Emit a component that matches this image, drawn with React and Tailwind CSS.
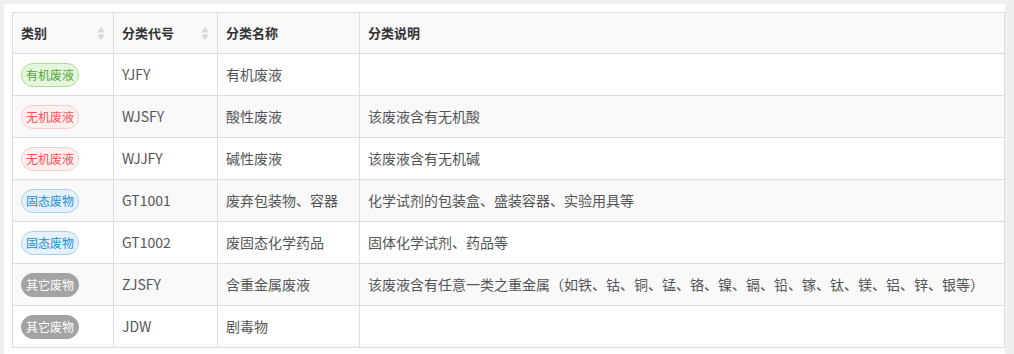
import React from "react";

const rows = [
  { t: "有机废液", c: "green", code: "YJFY", name: "有机废液", desc: "" },
  { t: "无机废液", c: "red", code: "WJSFY", name: "酸性废液", desc: "该废液含有无机酸" },
  { t: "无机废液", c: "red", code: "WJJFY", name: "碱性废液", desc: "该废液含有无机碱" },
  { t: "固态废物", c: "blue", code: "GT1001", name: "废弃包装物、容器", desc: "化学试剂的包装盒、盛装容器、实验用具等" },
  { t: "固态废物", c: "blue", code: "GT1002", name: "废固态化学药品", desc: "固体化学试剂、药品等" },
  { t: "其它废物", c: "gray", code: "ZJSFY", name: "含重金属废液", desc: "该废液含有任意一类之重金属（如铁、钴、铜、锰、铬、镍、镉、铅、镓、钛、镁、铝、锌、银等）" },
  { t: "其它废物", c: "gray", code: "JDW", name: "剧毒物", desc: "" },
];

const badgeCls = {
  green: "bg-[#e5f6dd] border-[#a7df92] text-[#4fa832]",
  red: "bg-[#fff0f0] border-[#ffcaca] text-[#f25555]",
  blue: "bg-[#e5f1fd] border-[#a8cff3] text-[#1d8ed6]",
  gray: "bg-[#a3a3a3] border-[#a3a3a3] text-white",
};

function Sort() {
  return (
    <svg width="8" height="13" viewBox="0 0 8 13" className="shrink-0">
      <path d="M4 0 L8 5.5 L0 5.5 Z" fill="#d8d8d8" />
      <path d="M4 13 L8 7.5 L0 7.5 Z" fill="#d8d8d8" />
    </svg>
  );
}

export default function App() {
  return (
    <div
      className="w-[1014px] h-[354px] bg-[#efefef] pt-[4px] pl-[4px] overflow-hidden"
      style={{ fontFamily: '"Noto Sans CJK SC", "Noto Sans", sans-serif' }}
    >
      <div className="w-[1001px] h-[400px] bg-white pt-[8px] pl-[8px]">
        <table className="w-[993px] border-collapse table-fixed text-[14px]">
          <colgroup>
            <col className="w-[101px]" />
            <col className="w-[104px]" />
            <col className="w-[142px]" />
            <col />
          </colgroup>
          <thead>
            <tr className="h-[41px] bg-[#f9f9f9] text-[13px]">
              <th className="border border-[#dddddd] px-[8px] text-left font-bold text-[#333]">
                <div className="flex items-center justify-between">
                  <span>类别</span>
                  <Sort />
                </div>
              </th>
              <th className="border border-[#dddddd] px-[8px] text-left font-bold text-[#333]">
                <div className="flex items-center justify-between">
                  <span>分类代号</span>
                  <Sort />
                </div>
              </th>
              <th className="border border-[#dddddd] px-[8px] text-left font-bold text-[#333]">分类名称</th>
              <th className="border border-[#dddddd] px-[8px] text-left font-bold text-[#333]">分类说明</th>
            </tr>
          </thead>
          <tbody>
            {rows.map((r, i) => (
              <tr key={i} className={`h-[42px] ${i % 2 === 1 ? "bg-[#f9f9f9]" : "bg-white"}`}>
                <td className="border border-[#dddddd] px-[8px] text-[#555]">
                  <span
                    className={`inline-flex items-center justify-center h-[24px] px-[4px] rounded-full border text-[12px] ${badgeCls[r.c]}`}
                  >
                    {r.t}
                  </span>
                </td>
                <td className="border border-[#dddddd] px-[8px] text-[#555]">{r.code}</td>
                <td className="border border-[#dddddd] px-[8px] text-[#555]">{r.name}</td>
                <td className="border border-[#dddddd] px-[8px] text-[#555]">{r.desc}</td>
              </tr>
            ))}
          </tbody>
        </table>
      </div>
    </div>
  );
}
